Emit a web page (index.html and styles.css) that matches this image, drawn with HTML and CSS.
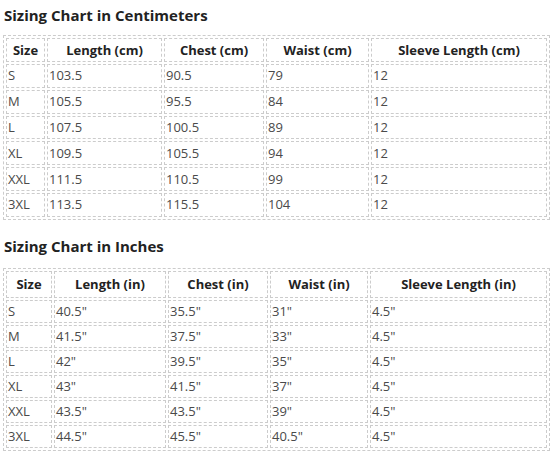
FILE: index.html
```html
<!DOCTYPE html>
<html>
<head>
<meta charset="utf-8">
<link rel="stylesheet" href="styles.css">
</head>
<body>
<section class="chart">
  <h3 class="chart-title">Sizing Chart in Centimeters</h3>
  <table class="size-table cm">
    <colgroup>
      <col class="c-size"><col class="c-len"><col class="c-chest"><col class="c-waist"><col class="c-sleeve">
    </colgroup>
    <thead>
      <tr><th>Size</th><th>Length (cm)</th><th>Chest (cm)</th><th>Waist (cm)</th><th>Sleeve Length (cm)</th></tr>
    </thead>
    <tbody>
      <tr><td>S</td><td>103.5</td><td>90.5</td><td>79</td><td>12</td></tr>
      <tr><td>M</td><td>105.5</td><td>95.5</td><td>84</td><td>12</td></tr>
      <tr><td>L</td><td>107.5</td><td>100.5</td><td>89</td><td>12</td></tr>
      <tr><td>XL</td><td>109.5</td><td>105.5</td><td>94</td><td>12</td></tr>
      <tr><td>XXL</td><td>111.5</td><td>110.5</td><td>99</td><td>12</td></tr>
      <tr><td>3XL</td><td>113.5</td><td>115.5</td><td>104</td><td>12</td></tr>
    </tbody>
  </table>
</section>
<section class="chart">
  <h3 class="chart-title">Sizing Chart in Inches</h3>
  <table class="size-table in">
    <colgroup>
      <col class="c-size"><col class="c-len"><col class="c-chest"><col class="c-waist"><col class="c-sleeve">
    </colgroup>
    <thead>
      <tr><th>Size</th><th>Length (in)</th><th>Chest (in)</th><th>Waist (in)</th><th>Sleeve Length (in)</th></tr>
    </thead>
    <tbody>
      <tr><td>S</td><td>40.5"</td><td>35.5"</td><td>31"</td><td>4.5"</td></tr>
      <tr><td>M</td><td>41.5"</td><td>37.5"</td><td>33"</td><td>4.5"</td></tr>
      <tr><td>L</td><td>42"</td><td>39.5"</td><td>35"</td><td>4.5"</td></tr>
      <tr><td>XL</td><td>43"</td><td>41.5"</td><td>37"</td><td>4.5"</td></tr>
      <tr><td>XXL</td><td>43.5"</td><td>43.5"</td><td>39"</td><td>4.5"</td></tr>
      <tr><td>3XL</td><td>44.5"</td><td>45.5"</td><td>40.5"</td><td>4.5"</td></tr>
    </tbody>
  </table>
</section>
</body>
</html>
```
FILE: styles.css
```css
html, body {
  margin: 0;
  padding: 0;
  background: #fff;
}
body {
  padding: 0 4px 0 3px;
  font-family: "Open Sans", "Noto Sans", sans-serif;
  color: #444;
}
.chart-title {
  margin: 4px 0 0 1px;
  font-size: 15px;
  font-weight: 700;
  color: #222;
  line-height: 22px;
  height: 31px;
}
.chart + .chart .chart-title {
  margin-top: 15px;
  margin-bottom: 2px;
}
.size-table {
  width: 100%;
  table-layout: fixed;
  border: 1px dashed #ccc;
  border-spacing: 2px;
  font-size: 13px;
}
.size-table th,
.size-table td {
  border: 1px dashed #ccc;
  padding: 0 1px;
  white-space: nowrap;
}
.size-table th {
  color: #222;
  font-weight: 700;
  text-align: center;
  height: 22px;
  line-height: 22px;
}
.size-table td {
  text-align: left;
  color: #4a4a4a;
  height: 21.8px;
  line-height: 21px;
}
.in th {
  height: 25px;
  line-height: 25px;
}
.in td {
  height: 21px;
}
.cm .c-size { width: 39px; }
.cm .c-len { width: 115px; }
.cm .c-chest { width: 100px; }
.cm .c-waist { width: 103px; }
.in .c-size { width: 46px; }
.in .c-len { width: 112px; }
.in .c-chest { width: 100px; }
.in .c-waist { width: 98px; }
```
